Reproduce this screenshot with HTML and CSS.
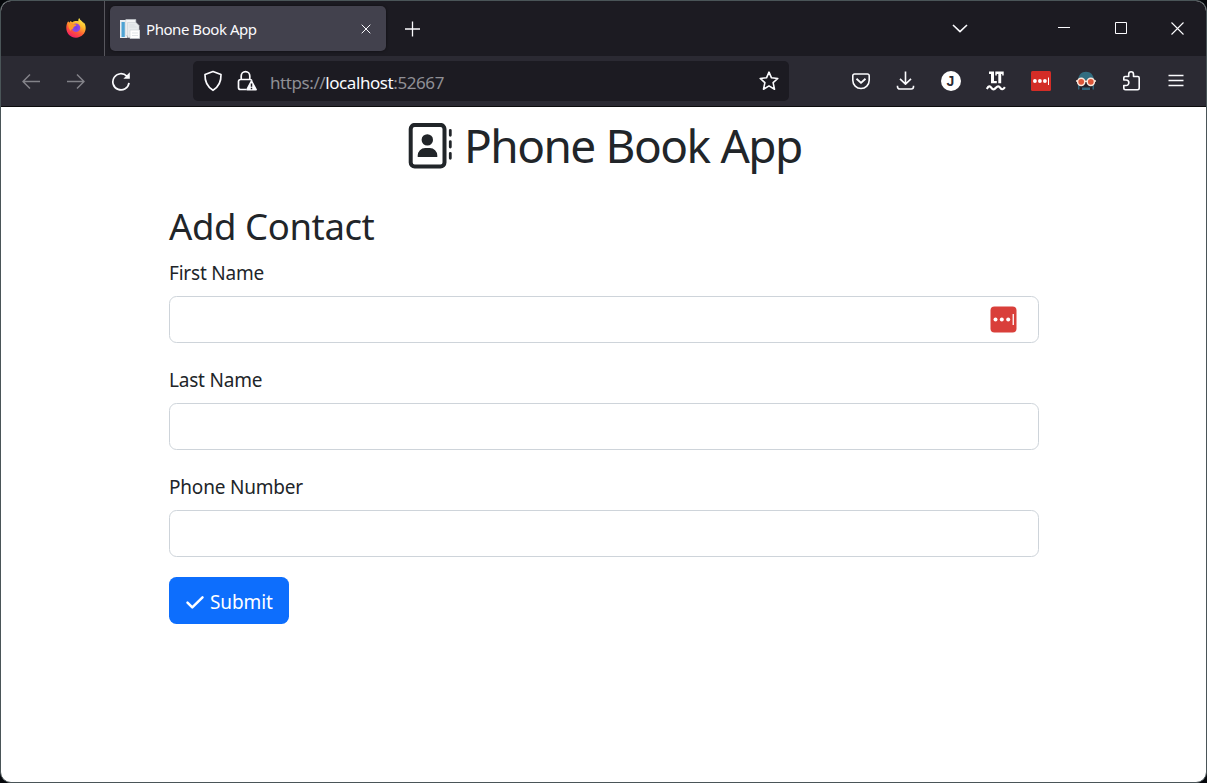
FILE: index.html
```html
<!DOCTYPE html>
<html lang="en">
<head>
<meta charset="utf-8">
<title>Phone Book App</title>
<link rel="stylesheet" href="styles.css">
</head>
<body>
<div class="window">
  <header class="tabbar">
    <div class="pinned">
      <svg width="20" height="20" viewBox="0 0 20 20">
        <defs>
          <linearGradient id="fox" x1=".8" y1="0" x2=".25" y2="1"><stop offset="0" stop-color="#fff44f"/><stop offset=".35" stop-color="#ffb72b"/><stop offset=".65" stop-color="#ff5a36"/><stop offset="1" stop-color="#f5156c"/></linearGradient>
          <radialGradient id="globe"><stop offset="0" stop-color="#6d3cf0"/><stop offset="1" stop-color="#9c4ad8"/></radialGradient>
        </defs>
        <path fill="url(#fox)" d="M13.2 0c-.8 1-1 2.200-.8 3.300C10.500 2.900 8 3 6.600 4.200 5.700 4 5 3.600 4.600 3 4.200 3.300 4 3.900 3.900 4.400 3.200 4.300 2.500 3.700 2.200 3.200 1 4.800.2 7.200.3 10c0 5.500 4.300 9.700 9.700 9.700s9.700-4.200 9.700-9.600c0-2.600-.9-4.700-2.200-6.100l.2 1.600C16.500 3.200 14.200 2.600 13.200 0z"/>
        <circle cx="10" cy="9.700" r="4.300" fill="url(#globe)"/>
        <path fill="#ff9827" d="M2.500 5.600c2-.8 3.700-.4 4.800.7 1.100-.1 2.400 0 3.300.8-.5 1-1.700 1.100-2.500 1.600-.7.500-1.100 1.100-.8 2-1.600-.2-2.700 1-2.200 2.500C2.800 11.500 2 8.500 2.500 5.600z"/>
      </svg>
    </div>
    <div class="tab">
      <svg width="20" height="20" viewBox="0 0 20 20">
        <path fill="#e9edf0" d="M0 1h7v18H0z"/><path fill="#4fa3d3" d="M1.500 3h3.300v15H1.500z"/>
        <path fill="#f4f5f6" stroke="#c6cbd0" stroke-width=".6" d="M5.800.5h10v16h-10z"/>
        <path fill="#e8ebed" stroke="#c9ced2" stroke-width=".6" d="M7.500 3.500h8.500l3 3v12H7.500z"/>
        <path fill="#fff" stroke="#cbd0d5" stroke-width=".6" d="M10 11h9.700v8.600H10z"/>
        <path stroke="#d3d8dc" stroke-width=".7" d="M9.500 6h5M9.500 8h7M12 14h6M12 16.500h6"/>
      </svg>
      <span class="tab-title">Phone Book App</span>
      <svg class="tab-close" width="10" height="10" viewBox="0 0 10 10"><path class="line" d="M.7.700l8.600 8.600M9.300.700L.7 9.300"/></svg>
    </div>
    <div class="newtab"><svg width="16" height="16" viewBox="0 0 16 16"><path class="line" stroke-width="1.300" d="M8.500 .5v15M1 8h15"/></svg></div>
    <div class="window-controls">
      <svg class="list-tabs" width="16" height="10" viewBox="0 0 16 10"><path class="line" stroke-width="1.600" d="M1 1l7 6.700 7-6.700"/></svg>
      <svg width="12" height="12" viewBox="0 0 12 12"><path class="line" stroke-width="1" d="M0 4.500h12"/></svg>
      <svg class="maximize" width="12" height="12" viewBox="0 0 12 12"><path class="line" stroke-width="1" d="M.5.500h11v11H.5z"/></svg>
      <svg width="13" height="13" viewBox="0 0 13 13"><path class="line" stroke-width="1.100" d="M.5.500l12 12M12.500.500l-12 12"/></svg>
    </div>
  </header>

  <nav class="toolbar">
    <div class="buttons">
      <span class="btn dim"><svg width="20" height="20" viewBox="0 0 20 20"><path class="line" stroke-width="1.500" d="M19 10.500H2M9 3.500l-7 7 7 7"/></svg></span>
      <span class="btn dim"><svg width="20" height="20" viewBox="0 0 20 20"><path class="line" stroke-width="1.500" d="M1 10.500h17M11 3.500l7 7-7 7"/></svg></span>
      <span class="btn"><svg width="20" height="20" viewBox="0 0 20 20"><path class="line" stroke-width="1.700" d="M18 11.800A8.100 8.100 0 1 1 15.800 5.200"/><path fill="#fbfbfe" d="M18.800 1.300v6.400h-6.400z"/></svg></span>
    </div>
    <div class="urlbar">
      <svg class="shield" width="20" height="22" viewBox="0 0 20 22"><path class="line" stroke-width="1.700" d="M10 1.500l8 3c.2 6.500-1.700 12-8 15.800C3.700 16.500 1.800 11 2 4.500z"/></svg>
      <svg class="lock" width="20" height="22" viewBox="0 0 20 22"><path class="line" stroke-width="1.700" d="M4.200 9V6a4.300 4.300 0 0 1 8.600 0v3M9 19.500H3.500A2 2 0 0 1 1.500 17.500V11.500a2 2 0 0 1 2-2h9.500q1.600 0 1.900 1.300"/><path fill="#fbfbfe" d="M14.500 10.500q.6 0 .9.500l4.400 8.200q.5 1.300-.8 1.300h-9q-1.300 0-.8-1.300l4.400-8.200q.3-.5.900-.5z"/><path stroke="#1c1b22" stroke-width="1.500" d="M14.500 13.500v3.300M14.500 17.800v1.400"/></svg>
      <span class="url">https://<b>localhost</b>:52667</span>
      <svg class="star" width="20" height="20" viewBox="0 0 20 20"><path class="line" stroke-width="1.600" d="M10 1.200l2.500 5.600 6.300.7-4.700 4.200 1.400 6.500-5.500-3.300-5.500 3.300 1.400-6.500L1.200 7.500l6.300-.7z"/></svg>
    </div>
    <div class="buttons">
      <span class="btn"><svg width="20" height="20" viewBox="0 0 20 20"><path class="line" stroke-width="1.600" d="M3.500 3h13a1.700 1.700 0 0 1 1.700 1.700v4.600a8.200 8.200 0 0 1-16.400 0V4.700a1.700 1.700 0 0 1 1.700-1.700z"/><path class="line" stroke-width="1.900" d="M5.500 7.700l4.500 4.200 4.500-4.200"/></svg></span>
      <span class="btn"><svg width="20" height="20" viewBox="0 0 20 20"><path class="line" stroke-width="1.600" d="M9.500 .5v12.700M4 7.900l5.500 5.300L15 7.900M1.500 14.800v1a2.200 2.200 0 0 0 2.200 2.200h11.600a2.200 2.200 0 0 0 2.200-2.200v-1"/></svg></span>
      <span class="btn"><span class="avatar">J</span></span>
      <span class="btn"><svg width="20" height="20" viewBox="0 0 20 20"><path fill="#fff" d="M3 .6h5v9.300h2.800v2.300H5V2.900H3zM9.300.6h8.400v4h-1.500V2.900h-1v9.300h-2.900V2.900h-1.500v1.700H9.300z"/><path fill="none" stroke="#fff" stroke-width="2.200" d="M.8 18c1.800-3.200 3.200-3.200 4.600-1.200s2.800 2 4.500 0 3-2 4.400 0 2.800 2 4.600-.6"/></svg></span>
      <span class="btn"><svg width="20" height="20" viewBox="0 0 20 20"><rect width="20" height="20" rx="1.500" fill="#d32d27"/><g fill="#fff"><circle cx="3.900" cy="10" r="1.900"/><circle cx="8.900" cy="10" r="1.900"/><circle cx="13.900" cy="10" r="1.900"/><path d="M17 6.500h1v7.500h-1z"/></g></svg></span>
      <span class="btn"><svg width="20" height="20" viewBox="0 0 20 20"><path fill="#326d80" d="M2 10C2 4 5.500.8 10 .8S18 4 18 10z"/><path fill="#242129" d="M2.500 9h15l-1 5v5H3.500v-5z"/><path fill="#32667b" d="M2 14h1.500v4.500H2zM16.500 14H18v4.500h-1.500zM6 16.500h8v2.500H6z"/><path stroke="#fbe6d9" stroke-width="1.600" d="M0 10h2M9 10.200h2M18 10h2"/><circle cx="5.200" cy="10.800" r="3.600" fill="#dd5638" stroke="#fbe6d9" stroke-width="1.500"/><circle cx="14.800" cy="10.800" r="3.600" fill="#dd5638" stroke="#fbe6d9" stroke-width="1.500"/></svg></span>
      <span class="btn"><svg width="20" height="20" viewBox="0 0 20 20"><path class="line" stroke-width="1.600" d="M2.800 9V6.700q0-1.200 1.200-1.200h3.700V3.200a2.400 2.400 0 0 1 4.800 0v2.300h4.300q1.400 0 1.400 1.400v10.200q0 1.700-1.700 1.700H4.500q-1.700 0-1.700-1.700v-2.600h2.300a2.700 2.700 0 0 0 0-5.500z"/></svg></span>
      <span class="btn"><svg width="20" height="20" viewBox="0 0 20 20"><path class="line" stroke-width="1.500" d="M2.500 4.500h15M2.500 9.500h15M2.500 14.500h15"/></svg></span>
    </div>
  </nav>

  <main class="page">
    <h1 class="brand">
      <svg width="46" height="46" viewBox="0 0 46 46"><rect x="2.700" y="1.900" width="33.800" height="41.600" rx="4" fill="none" stroke="#212529" stroke-width="4"/><circle cx="19.300" cy="16.900" r="5.700" fill="#212529"/><path fill="#212529" d="M9.700 34.100v-1.600a7.500 7.500 0 0 1 7.500-7.500h4.600a7.500 7.500 0 0 1 7.500 7.500v1.600z"/><path stroke="#212529" stroke-width="2.800" stroke-linecap="round" d="M42.300 7.300v5M42.300 18.600v5.500M42.300 30.300v5"/></svg>
      <span class="brand-name">Phone Book App</span>
    </h1>
    <form class="contact">
      <h2 class="heading">Add Contact</h2>
      <label class="field"><span class="label">First Name</span><span class="input"><svg width="27" height="27" viewBox="0 0 27 27"><rect x=".5" y=".5" width="26" height="26" rx="4" fill="#d93f3a"/><g fill="#fff"><circle cx="5.500" cy="13.500" r="2"/><circle cx="11.800" cy="13.500" r="2"/><circle cx="18.200" cy="13.500" r="2"/><path d="M22.600 8h1.300v11h-1.300z"/></g></svg></span></label>
      <label class="field"><span class="label">Last Name</span><span class="input"></span></label>
      <label class="field"><span class="label">Phone Number</span><span class="input"></span></label>
      <button class="submit" type="button"><svg width="20" height="20" viewBox="0 0 20 20"><path fill="none" stroke="#fff" stroke-width="2.500" stroke-linecap="round" stroke-linejoin="round" d="M2.500 10.600l4.800 4.800L17.500 5.300"/></svg><span>Submit</span></button>
    </form>
  </main>
</div>
</body>
</html>
```
FILE: styles.css
```css
* { box-sizing: border-box; }
body { margin: 0; background: #05070b; font-family: "Noto Sans", "Open Sans", sans-serif; }
svg { display: block; flex: none; }
.line { fill: none; stroke: #fbfbfe; stroke-linejoin: round; }
.window { width: 1207px; height: 783px; border: 1px solid #4a5558; border-radius: 11px; overflow: hidden; background: #fff; display: flex; flex-direction: column; }

.tabbar { height: 55px; flex: none; background: #1c1b22; display: flex; align-items: flex-start; }
.pinned { width: 104px; height: 55px; border-right: 1px solid #57565d; padding: 17px 0 0 65px; }
.tab { width: 276px; height: 45px; margin: 5px 0 0 5px; padding: 0 15px 0 10px; border-radius: 5px; background: #42414d; box-shadow: 0 0 3px #0008; display: flex; align-items: center; color: #fbfbfe; font-size: 15px; }
.tab-title { margin-left: 6px; white-space: nowrap; letter-spacing: -0.45px; }
.tab-close { margin-left: auto; }
.newtab { margin: 20px 0 0 18px; }
.window-controls { margin-left: auto; height: 55px; padding-right: 22px; display: flex; align-items: center; gap: 44px; }
.list-tabs { margin-right: 46px; }
.maximize { margin-left: 1px; margin-top: -1px; }

.toolbar { height: 51px; flex: none; background: #2b2a33; border-bottom: 1px solid #0c0c0d; padding: 0 8px 0 7px; display: flex; align-items: center; }
.buttons { display: flex; }
.btn { width: 45px; height: 50px; display: flex; align-items: center; justify-content: center; }
.dim { opacity: 0.42; }
.urlbar { width: 596px; height: 40px; margin: 0 auto 0 50px; padding: 0 10px; border-radius: 5px; background: #1c1b22; display: flex; align-items: center; }
.lock { margin-left: 14px; }
.url { margin-left: 13px; color: #8f8f95; font-size: 17px; letter-spacing: -0.42px; white-space: nowrap; padding-top: 2px; }
.url b { font-weight: 400; color: #fbfbfe; }
.star { margin-left: auto; }
.avatar { width: 20px; height: 20px; border-radius: 50%; background: #fff; color: #2b2a33; font: 700 14px/20px "Liberation Sans", sans-serif; text-align: center; }

.page { flex: 1; color: #212529; }
.brand { margin: 0; padding: 16px 0 0 407px; height: 95px; display: flex; font-weight: 400; font-size: 46px; line-height: 45px; white-space: nowrap; }
.brand-name { margin-left: 10px; letter-spacing: -1.55px; word-spacing: 0.5px; }
.contact { width: 870px; margin-left: 168px; }
.heading { margin: 0; height: 60px; font-weight: 400; font-size: 36.5px; line-height: 49px; letter-spacing: -0.4px; }
.field { display: block; height: 107px; font-size: 19px; }
.label { display: block; height: 34px; line-height: 22px; letter-spacing: -0.2px; }
.input { height: 47px; border: 1px solid #ced4da; border-radius: 7.500px; display: flex; align-items: center; justify-content: flex-end; padding-right: 21px; }
.submit { width: 120px; height: 47px; margin: -6px 0 0; padding: 0 0 0 16px; border: 0; border-radius: 7.500px; background: #0d6efd; color: #fff; font: 19px "Noto Sans", sans-serif; display: flex; align-items: center; }
.submit span { margin: 2px 0 0 5px; letter-spacing: -0.1px; }
.submit svg { margin-top: 3px; }
```
